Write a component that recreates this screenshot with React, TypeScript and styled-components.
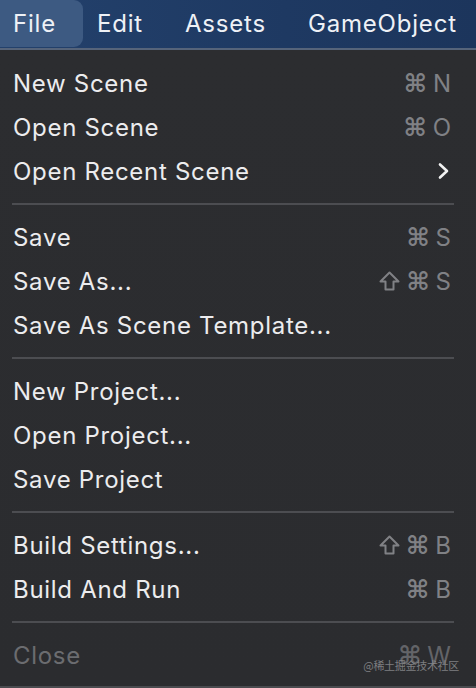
import React from "react";
import styled, { createGlobalStyle } from "styled-components";

const Global = createGlobalStyle`
  html, body { margin: 0; padding: 0; background: #2b2c2f; }
  body { font-family: Inter, "Noto Sans", "DejaVu Sans", sans-serif; }
`;

const Page = styled.div`
  width: 476px;
  height: 688px;
  overflow: hidden;
  position: relative;
  display: flex;
  flex-direction: column;
  background: #2b2c2f;
`;

const MenuBar = styled.div`
  height: 48px;
  display: flex;
  align-items: stretch;
  overflow: hidden;
  background: linear-gradient(90deg, #23416c 0%, #1e3962 60%, #1c355c 100%);
  border-bottom: 2px solid #56647a;
`;

const BarItem = styled.div<{ $active?: boolean }>`
  display: flex;
  align-items: center;
  flex-shrink: 0;
  box-sizing: border-box;
  width: ${(p) => (p.$active ? "83px" : "auto")};
  padding: ${(p) => (p.$active ? "0 0 0 13px" : "0 14px")};
  margin-right: ${(p) => (p.$active ? "0" : "14px")};
  font-size: 24px;
  font-weight: 400;
  letter-spacing: 0.8px;
  white-space: nowrap;
  color: #eef1f6;
  background: ${(p) => (p.$active ? "#3d5a82" : "transparent")};
  border-radius: ${(p) => (p.$active ? "0 9px 9px 0" : "0")};
  margin-bottom: 1px;
`;

const Menu = styled.div`
  flex: 1;
  display: flex;
  flex-direction: column;
  padding: 11px 0 0;
  background: linear-gradient(180deg, #2c2d30 0%, #2b2c2f 100%);
  border-bottom: 2px solid #4a4b4f;
  box-sizing: border-box;
  height: 640px;
`;

const Row = styled.div<{ $disabled?: boolean }>`
  height: 44px;
  display: flex;
  align-items: center;
  justify-content: space-between;
  padding: 0 25px 0 13px;
  font-size: 24px;
  font-weight: 400;
  letter-spacing: 0.7px;
  color: ${(p) => (p.$disabled ? "#6b6c70" : "#ececee")};
`;

const Shortcut = styled.span<{ $disabled?: boolean }>`
  display: flex;
  align-items: center;
  gap: 6px;
  color: ${(p) => (p.$disabled ? "#636468" : "#808185")};
  font-size: 24px;
  font-weight: 400;
  letter-spacing: 0;
`;

const Sym = styled.span`
  font-family: "DejaVu Sans", sans-serif;
  font-size: 25px;
  font-weight: 700;
`;

const Separator = styled.div`
  height: 2px;
  margin: 10px 22px 10px 12px;
  background: #4c4d51;
`;

const Watermark = styled.div`
  position: absolute;
  right: 17px;
  bottom: 15px;
  font-size: 11px;
  letter-spacing: -0.3px;
  color: #8c8d90;
  font-family: "Noto Sans CJK SC", sans-serif;
  opacity: 0.85;
`;

const Chevron = () => (
  <svg width="14" height="18" viewBox="0 0 14 18">
    <path d="M3 2.5 L10 9 L3 15.5" fill="none" stroke="#f2f2f2" strokeWidth="2.6" strokeLinecap="round" strokeLinejoin="round" />
  </svg>
);

const ShiftIcon = () => (
  <svg width="21" height="20" viewBox="0 0 21 20">
    <path d="M10.5 1.5 L19.5 10.5 L14.5 10.5 L14.5 18.5 L6.5 18.5 L6.5 10.5 L1.5 10.5 Z" fill="none" stroke="currentColor" strokeWidth="2" strokeLinejoin="round" />
  </svg>
);

type Item = { label: string; keys?: string[]; sub?: boolean; disabled?: boolean } | "sep";

const items: Item[] = [
  { label: "New Scene", keys: ["⌘", "N"] },
  { label: "Open Scene", keys: ["⌘", "O"] },
  { label: "Open Recent Scene", sub: true },
  "sep",
  { label: "Save", keys: ["⌘", "S"] },
  { label: "Save As...", keys: ["⇧", "⌘", "S"] },
  { label: "Save As Scene Template..." },
  "sep",
  { label: "New Project..." },
  { label: "Open Project..." },
  { label: "Save Project" },
  "sep",
  { label: "Build Settings...", keys: ["⇧", "⌘", "B"] },
  { label: "Build And Run", keys: ["⌘", "B"] },
  "sep",
  { label: "Close", keys: ["⌘", "W"], disabled: true },
];

export default function App() {
  return (
    <Page>
      <Global />
      <MenuBar>
        <BarItem $active>File</BarItem>
        <BarItem>Edit</BarItem>
        <BarItem>Assets</BarItem>
        <BarItem>GameObject</BarItem>
      </MenuBar>
      <Menu>
        {items.map((it, i) =>
          it === "sep" ? (
            <Separator key={i} />
          ) : (
            <Row key={i} $disabled={it.disabled}>
              <span>{it.label}</span>
              {it.sub ? (
                <Chevron />
              ) : it.keys ? (
                <Shortcut $disabled={it.disabled}>
                  {it.keys.map((k, j) =>
                    k === "⌘" ? <Sym key={j}>{k}</Sym> : k === "⇧" ? <ShiftIcon key={j} /> : <span key={j}>{k}</span>
                  )}
                </Shortcut>
              ) : null}
            </Row>
          )
        )}
      </Menu>
      <Watermark>@稀土掘金技术社区</Watermark>
    </Page>
  );
}
